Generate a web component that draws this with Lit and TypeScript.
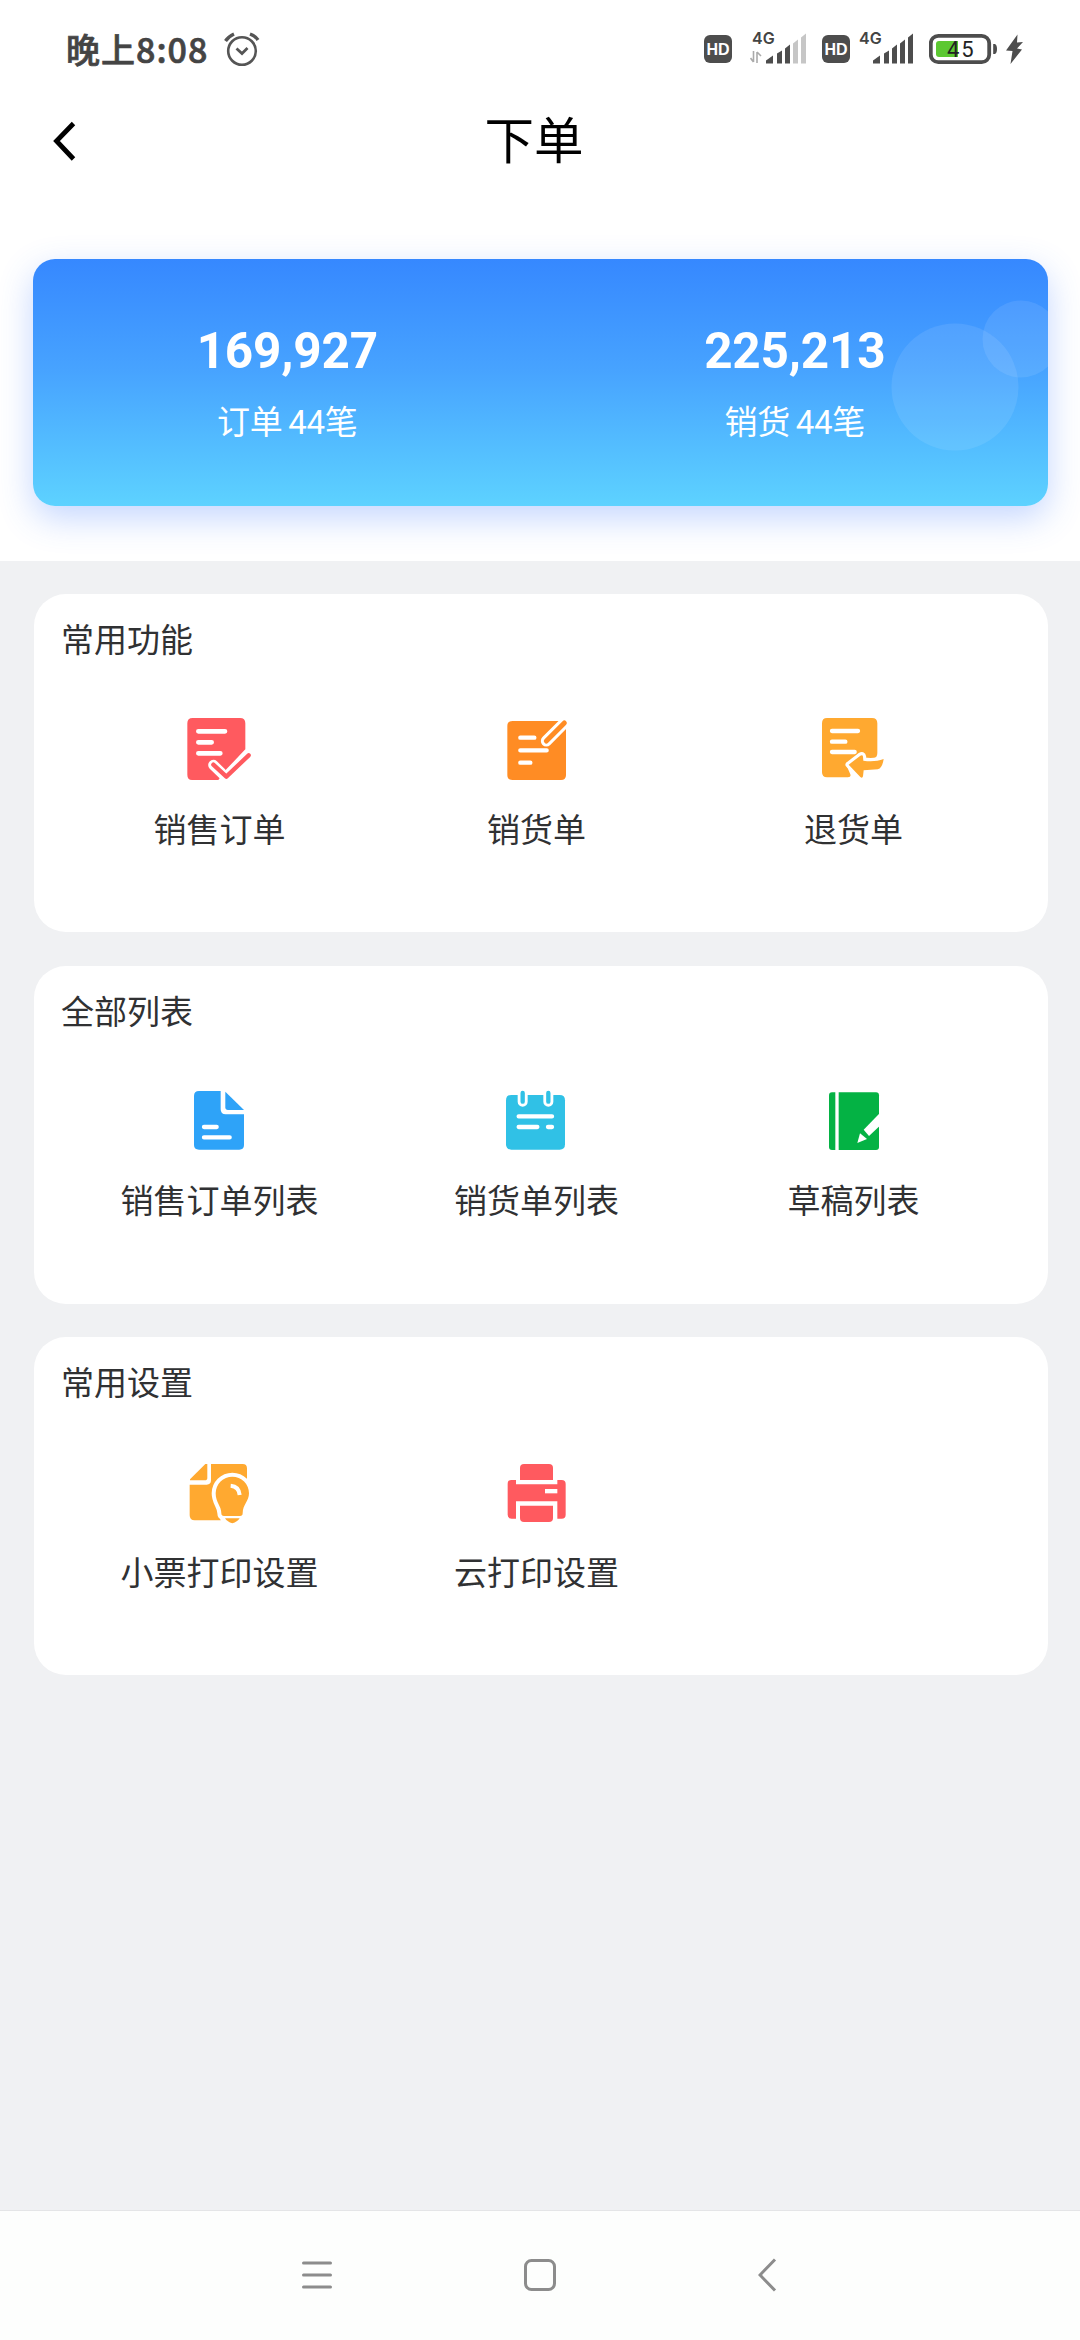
import { LitElement, html, svg, css, type SVGTemplateResult } from "lit";
import { customElement, property } from "lit/decorators.js";

type Entry = { label: string; icon: SVGTemplateResult };
type Section = { title: string; entries: Entry[] };

const RED = "#ff5a5f";
const ORANGE = "#ff8c24";
const AMBER = "#ffa930";
const BLUE = "#2ea3f8";
const CYAN = "#30c1e6";
const GREEN = "#04b244";

// Every feature icon is drawn on a 198 x 198 grid.
const bars = (d: string, width = 13) =>
  svg`<path d=${d} fill="none" stroke="#fff" stroke-width=${width} stroke-linecap="round"/>`;

const orderIcon = svg`
  <path fill=${RED} d="M20 3H162Q178 3 178 19V97L121 157L97 189H18Q4 189 4 173V19Q4 3 20 3Z"/>
  ${bars("M37 43H117M37 76H77M37 109H103", 14)}
  <path d="M82 144L121 182L188 114" fill="none" stroke="#fff" stroke-width="31" stroke-linecap="round" stroke-linejoin="round"/>
  <path d="M82 143L121 179L188 115" fill="none" stroke=${RED} stroke-width="13" stroke-linecap="round" stroke-linejoin="round"/>`;

const salesIcon = svg`
  <path fill=${ORANGE} d="M28 12H174Q189 12 189 27V174Q189 189 174 189H28Q13 189 13 174V27Q13 12 28 12Z"/>
  ${bars("M52 62H94M52 100H131M52 137H82")}
  <path d="M130 72L215 -13" fill="none" stroke="#fff" stroke-width="33" stroke-linecap="round"/>
  <path d="M130 72L184 18" fill="none" stroke=${ORANGE} stroke-width="15" stroke-linecap="round"/>`;

const arrow =
  "M86 143L121 116Q128 112 129 119L130 131C152 134 172 133 191 126C188 143 184 154 173 157L131 160L129 178Q127 185 121 180Z";
const returnIcon = svg`
  <path fill=${AMBER} d="M21 3H156Q172 3 172 19V108Q172 122 160 124H120L80 146L91 172Q94 181 84 181H21Q6 181 6 166V19Q6 3 21 3Z"/>
  ${bars("M36 42H114M36 74H76M36 105H104")}
  <path d=${arrow} fill="#fff" stroke="#fff" stroke-width="19" stroke-linejoin="round"/>
  <path d=${arrow} fill=${AMBER}/>`;

const orderListIcon = svg`
  <path fill=${BLUE} d="M39 9H104V64Q104 79 119 79H174V171Q174 185 160 185H39Q24 185 24 171V24Q24 9 39 9Z"/>
  <path fill=${BLUE} d="M118 11L174 66H126Q118 66 118 58Z"/>
  ${bars("M54 117H92M54 148H131")}`;

const salesListIcon = svg`
  <path fill=${CYAN} d="M25 21H170Q186 21 186 37V169Q186 185 170 185H25Q9 185 9 169V37Q9 21 25 21Z"/>
  <path d="M59 0V41M136 0V41" fill="none" stroke="#fff" stroke-width="30" stroke-linecap="round"/>
  <path d="M59 15V41M136 15V41" fill="none" stroke=${CYAN} stroke-width="13" stroke-linecap="round"/>
  ${bars("M47 85H147M47 117H103M135 117H147")}`;

const draftIcon = svg`
  <path fill=${GREEN} d="M36 13H46V186H36Q27 186 27 177V22Q27 13 36 13Z"/>
  <path fill=${GREEN} d="M56 13H168Q177 13 177 22V177Q177 186 168 186H56Z"/>
  <path fill="#fff" d="M131 125L179 76V114L147 144Z"/>
  <path fill="#fff" d="M120 136L141 153L112 165Z"/>`;

const bulb =
  "M106 160C106 138 89 128 89 100A50 50 0 0 1 189 100C189 124 170 134 170 160Q170 168 162 168H114Q106 168 106 160Z";
const receiptIcon = svg`
  <path fill=${AMBER} d="M75 12H170Q183 12 183 25V70L130 181H26Q11 181 11 166V74H62Q75 74 75 61Z"/>
  <path fill=${AMBER} d="M58 12H64V53Q64 61 56 61H12V58Z"/>
  <path d=${bulb} fill="#fff" stroke="#fff" stroke-width="24"/>
  <path fill="#fff" d="M96 158H180V198H110Z"/>
  <path d=${bulb} fill=${AMBER}/>
  <path fill=${AMBER} d="M117 175H161Q154 186 139 190Q124 186 117 175Z"/>
  <path d="M134 77Q159 79 161 105" fill="none" stroke="#fff" stroke-width="12"/>`;

const printerIcon = svg`
  <path fill=${RED} d="M63 12H138Q150 12 150 24V60H51V24Q51 12 63 12Z"/>
  <path fill=${RED} d="M24 60H39V73H163V60H176Q188 60 188 72V164Q188 176 176 176H163V124H39V176H26Q14 176 14 164V72Q14 60 24 60Z"/>
  <path fill=${RED} d="M51 137H150V174Q150 186 138 186H63Q51 186 51 174Z"/>
  <path fill="#fff" d="M126 87H163V100H126Z"/>`;

const SECTIONS: Section[] = [
  {
    title: "常用功能",
    entries: [
      { label: "销售订单", icon: orderIcon },
      { label: "销货单", icon: salesIcon },
      { label: "退货单", icon: returnIcon },
    ],
  },
  {
    title: "全部列表",
    entries: [
      { label: "销售订单列表", icon: orderListIcon },
      { label: "销货单列表", icon: salesListIcon },
      { label: "草稿列表", icon: draftIcon },
    ],
  },
  {
    title: "常用设置",
    entries: [
      { label: "小票打印设置", icon: receiptIcon },
      { label: "云打印设置", icon: printerIcon },
    ],
  },
];

@customElement("status-bar")
class StatusBar extends LitElement {
  static styles = css`
    :host {
      display: flex;
      align-items: center;
      height: 98px;
      padding: 0 57px 0 66px;
      box-sizing: border-box;
      color: #444;
    }
    .time {
      font: 500 34px/40px "Noto Sans CJK SC", sans-serif;
      letter-spacing: 1px;
      white-space: nowrap;
      -webkit-text-stroke: 0.7px #444;
    }
    .alarm {
      margin-left: 16px;
    }
    .spacer {
      flex: 1;
    }
    .hd {
      width: 28px;
      height: 28px;
      border-radius: 6px;
      background: #4d4d4d;
      color: #fff;
      font: 700 16px/29px "Liberation Sans", sans-serif;
      text-align: center;
    }
    .first {
      margin: 0 16px 0 18px;
    }
    .second {
      margin: 0 16px 0 9px;
    }
    .bolt {
      margin-left: 9px;
    }
    svg {
      display: block;
    }
    .net {
      font: 600 16px Inter, sans-serif;
    }
    .level {
      font: 400 22px Roboto, sans-serif;
    }
  `;

  private signal(strength: number) {
    const shapes = [
      "M0 30V27L7 22V30Z",
      "M11 30V20L16 17V30Z",
      "M19 30V15L24 11V30Z",
      "M27 30V10L32 6V30Z",
      "M35 30V4L40 0V30Z",
    ];
    return shapes.map((d, i) => svg`<path d=${d} fill=${i < strength ? "#4d4d4d" : "#c6c6c6"}/>`);
  }

  render() {
    return html`
      <span class="time">晚上8:08</span>
      <svg class="alarm" width="36" height="36" viewBox="0 0 36 36" fill="none" stroke="#555" stroke-width="2.6">
        <circle cx="18" cy="20" r="13.8" />
        <path d="M12.5 17.500L18 22.500L23.5 17" stroke-width="2.8" />
        <path d="M1.5 10Q4.5 5.500 10 3M26 3Q31.5 5 34 9" stroke-width="3.4" />
      </svg>
      <span class="spacer"></span>
      <span class="hd">HD</span>
      <svg class="first" width="56" height="44" viewBox="0 0 56 44">
        <text class="net" x="2" y="17" fill="#444">4G</text>
        <path d="M3.5 24V35M7 36V25M0.5 31L3.5 35M7 25L11 29" fill="none" stroke="#aaa" stroke-width="1.6" />
        <g transform="translate(16 6.5)">${this.signal(3)}</g>
      </svg>
      <span class="hd">HD</span>
      <svg class="second" width="54" height="44" viewBox="0 0 54 44">
        <text class="net" x="0" y="17" fill="#444">4G</text>
        <g transform="translate(14 6.5)">${this.signal(5)}</g>
      </svg>
      <svg width="68" height="32" viewBox="0 0 68 32">
        <rect x="1.8" y="2.8" width="58.4" height="26.4" rx="7.5" fill="#fff" stroke="#4d4d4d" stroke-width="3.8" />
        <path d="M10 8H29V24H10Q7 24 7 21V11Q7 8 10 8Z" fill="#5cc832" />
        <path d="M64.2 11H66Q68 12 68 16T66 21H64.2Z" fill="#4d4d4d" />
        <text class="level" x="18" y="24" fill="#222" letter-spacing="1.8">45</text>
      </svg>
      <svg class="bolt" width="17" height="32" viewBox="0 0 17 32">
        <path d="M11.5 1.5L0 17.5L6.5 18L4.5 31L16 16.500L11 15.500L17 9L11 9.500Z" fill="#4d4d4d" />
      </svg>
    `;
  }
}

@customElement("feature-card")
class FeatureCard extends LitElement {
  @property({ attribute: false }) section!: Section;

  static styles = css`
    :host {
      display: block;
      height: 338px;
      box-sizing: border-box;
      padding: 23px 36px 0 27px;
      border-radius: 32px;
      background: #fff;
      color: #303133;
      font: 400 33px/48px Roboto, "Noto Sans CJK SC", sans-serif;
    }
    .grid {
      display: grid;
      grid-template-columns: repeat(3, 317px);
      margin-top: 51.5px;
    }
    .item {
      display: flex;
      flex-direction: column;
      align-items: center;
      gap: 24px;
      white-space: nowrap;
    }
    .icon {
      width: 66px;
      height: 66px;
      display: block;
      margin-right: 1.5px;
      overflow: hidden;
    }
  `;

  render() {
    return html`
      <div class="title">${this.section.title}</div>
      <div class="grid">
        ${this.section.entries.map(
          (e) => html`<div class="item">
            <svg class="icon" viewBox="0 0 198 198">${e.icon}</svg>
            <span>${e.label}</span>
          </div>`
        )}
      </div>
    `;
  }
}

@customElement("app-root")
class AppRoot extends LitElement {
  static styles = css`
    :host {
      display: flex;
      flex-direction: column;
      width: 1080px;
      height: 2340px;
      background: #f0f1f3;
      font-family: Roboto, "Noto Sans CJK SC", sans-serif;
    }
    .top {
      height: 561px;
      background: #fff;
      overflow: hidden;
    }
    .header {
      display: grid;
      grid-template-columns: 76px 1fr 76px;
      align-items: center;
      height: 82px;
      padding: 0 12px 0 0;
      color: #000;
    }
    .header h1 {
      margin: 0 0 3px;
      text-align: center;
      font: 400 49.5px/72px "Noto Sans CJK SC", sans-serif;
    }
    .back {
      display: block;
      margin: 4px 0 0 52px;
    }
    .summary {
      position: relative;
      display: grid;
      grid-template-columns: 1fr 1fr;
      height: 247px;
      margin: 79px 32px 0 33px;
      border-radius: 22px;
      background: linear-gradient(#3688ff, #47a3ff 45%, #5dd2ff);
      box-shadow: 0 12px 34px rgba(60, 120, 255, 0.3);
      color: #fff;
      text-align: center;
    }
    .bubbles {
      position: absolute;
      inset: 0;
      border-radius: 22px;
    }
    .stat {
      padding: 62px 0 0 1px;
    }
    .amount {
      font-size: 49.5px;
      line-height: 60px;
      font-weight: 700;
      letter-spacing: -0.2px;
    }
    .count {
      margin-top: 18px;
      font-size: 33px;
      line-height: 48px;
      word-spacing: -2px;
      letter-spacing: -0.3px;
    }
    .cards {
      flex: 1;
      display: flex;
      flex-direction: column;
      gap: 33.5px;
      padding: 33px 32px 0 34px;
    }
    .nav {
      display: flex;
      align-items: center;
      height: 130px;
      padding: 0 0 2px 301px;
      box-sizing: border-box;
      background: #fdfefd;
      border-top: 1px solid #e4e5e7;
    }
    .home {
      margin: 0 201px 0 190px;
    }
  `;

  render() {
    return html`
      <div class="top">
        <status-bar></status-bar>
        <div class="header">
          <svg class="back" width="24" height="40" viewBox="0 0 24 40" fill="none" stroke="#000" stroke-width="4.8">
            <path d="M21.500 2.500L4.500 20L21.500 38" />
          </svg>
          <h1>下单</h1>
        </div>
        <div class="summary">
          <svg class="bubbles" width="1015" height="247" viewBox="0 0 1015 247">
            <circle cx="922" cy="128" r="63.5" fill="#fff" fill-opacity="0.09" />
            <circle cx="988" cy="80" r="38.5" fill="#fff" fill-opacity="0.09" />
          </svg>
          <div class="stat">
            <div class="amount">169,927</div>
            <div class="count">订单 44笔</div>
          </div>
          <div class="stat">
            <div class="amount">225,213</div>
            <div class="count">销货 44笔</div>
          </div>
        </div>
      </div>
      <div class="cards">
        ${SECTIONS.map((s) => html`<feature-card .section=${s}></feature-card>`)}
      </div>
      <div class="nav">
        <svg width="32" height="34" viewBox="0 0 32 34" stroke="#8c8c8c" stroke-width="3" stroke-linecap="round">
          <path d="M2.500 5H29.500M2.500 17H29.500M2.500 29H29.500" />
        </svg>
        <svg class="home" width="34" height="34" viewBox="0 0 34 34" fill="none" stroke="#8c8c8c" stroke-width="3">
          <rect x="2.500" y="2.500" width="29" height="29" rx="6" />
        </svg>
        <svg width="20" height="34" viewBox="0 0 20 34" fill="none" stroke="#8c8c8c" stroke-width="3">
          <path d="M17 1.500L2 17L17 32.500" />
        </svg>
      </div>
    `;
  }
}
